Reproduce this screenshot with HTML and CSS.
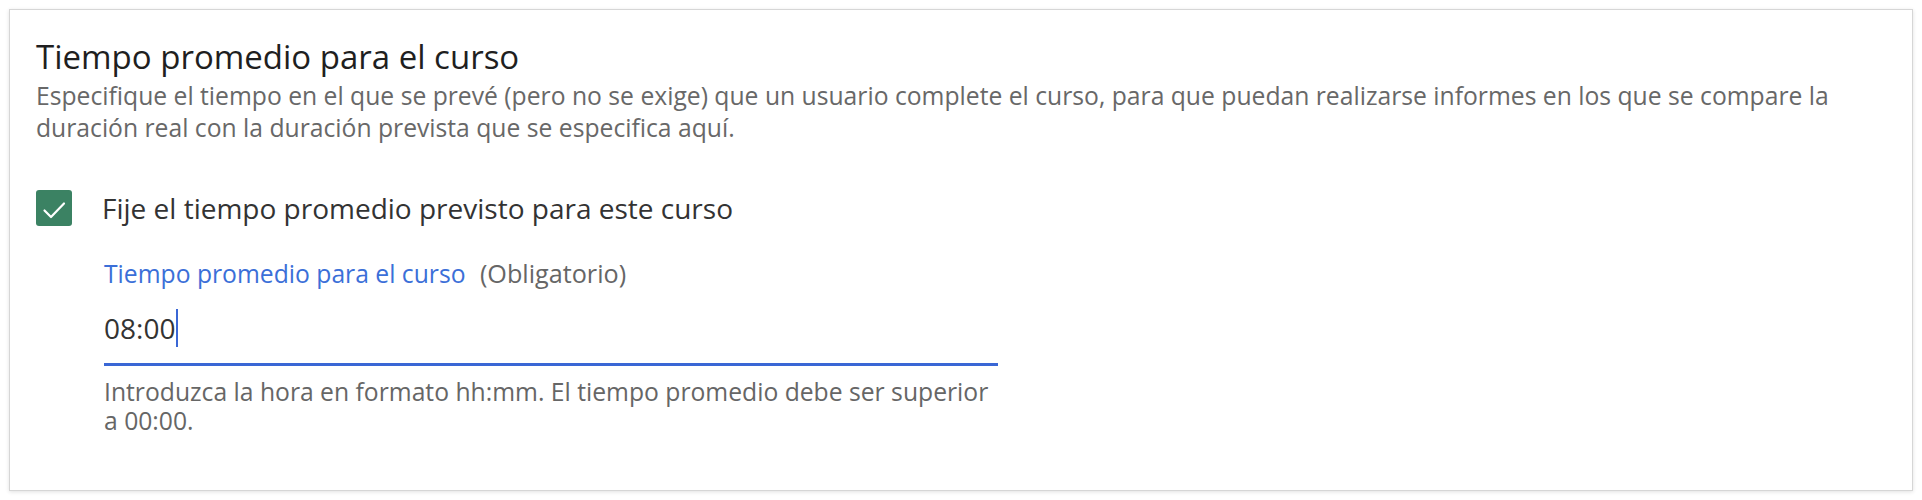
FILE: index.html
```html
<!DOCTYPE html>
<html lang="es">
<head>
    <meta charset="UTF-8">
    <meta name="viewport" content="width=device-width, initial-scale=1.0">
    <title>Tiempo promedio para el curso</title>
    <link rel="stylesheet" href="styles.css">
</head>
<body>
    <div class="card">
        <h2 class="card-title">Tiempo promedio para el curso</h2>
        <p class="card-desc">Especifique el tiempo en el que se prevé (pero no se exige) que un usuario complete el curso, para que puedan realizarse informes en los que se compare la duración real con la duración prevista que se especifica aquí.</p>

        <label class="check-row">
            <span class="checkbox">
                <svg width="36" height="36" viewBox="0 0 36 36">
                    <path d="M8.5 20.5 L15 27 L28 13.5" fill="none" stroke="#fff" stroke-width="2.2" stroke-linecap="round" stroke-linejoin="round"/>
                </svg>
            </span>
            <span class="check-label">Fije el tiempo promedio previsto para este curso</span>
        </label>

        <div class="field">
            <div class="field-label">Tiempo promedio para el curso <span class="field-req">(Obligatorio)</span></div>
            <div class="field-input">08:00<span class="caret"></span></div>
            <div class="field-help">Introduzca la hora en formato hh:mm. El tiempo promedio debe ser superior a 00:00.</div>
        </div>
    </div>
</body>
</html>
```

FILE: styles.css
```css
body {
    font-family: "Open Sans", "Noto Sans", Arial, sans-serif;
    background-color: #fff;
    margin: 0;
    padding: 9px;
}
.card {
    background-color: #fff;
    border: 1px solid #d6d6d6;
    box-shadow: 0 1px 4px rgba(0, 0, 0, 0.12);
    padding: 29px 26px 55px 26px;
}
.card-title {
    margin: 0;
    font-size: 33px;
    font-weight: 400;
    line-height: 35px;
    color: #1f1f1f;
}
.card-desc {
    margin: 6px 0 0 0;
    font-size: 24.7px;
    line-height: 32px;
    color: #686868;
}
.check-row {
    display: flex;
    align-items: center;
    margin-top: 46px;
}
.checkbox {
    width: 36px;
    height: 36px;
    border-radius: 3px;
    background-color: #3b8263;
    display: flex;
}
.check-label {
    margin-left: 30px;
    font-size: 28px;
    line-height: 36px;
    color: #333;
}
.field {
    margin: 31px 0 0 68px;
    width: 894px;
}
.field-label {
    font-size: 24.7px;
    line-height: 32px;
    color: #3b6fd8;
}
.field-req {
    margin-left: 8px;
    font-size: 25.2px;
    color: #666;
}
.field-input {
    font-size: 28px;
    line-height: 40px;
    color: #333;
    margin-top: 18px;
    padding-bottom: 15px;
    border-bottom: 3px solid #3a67d5;
}
.caret {
    display: inline-block;
    width: 2px;
    height: 38px;
    margin-left: 1px;
    vertical-align: -8px;
    background-color: #3a67d5;
}
.field-help {
    margin-top: 12px;
    font-size: 24.7px;
    line-height: 28.5px;
    color: #666;
}
```
